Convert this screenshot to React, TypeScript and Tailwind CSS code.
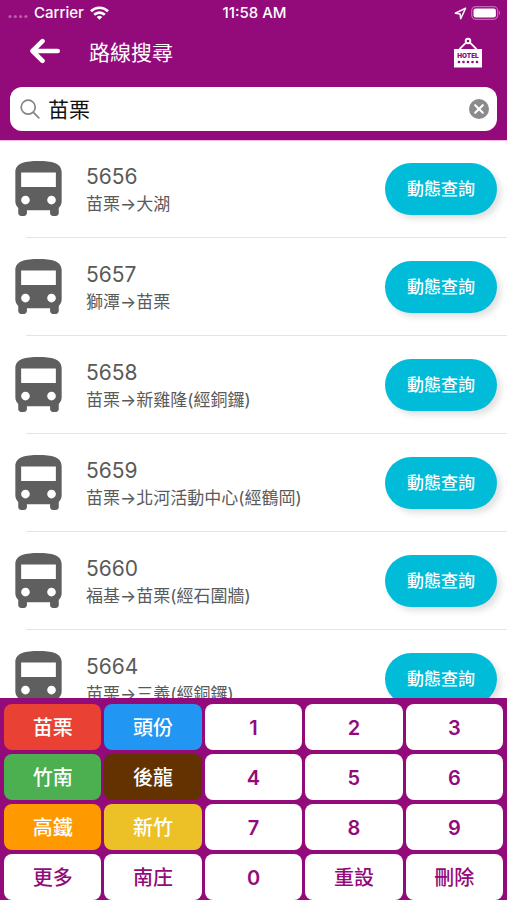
import { useState } from 'react';

interface Route {
  id: string;
  name: string;
}

interface Key {
  label: string;
  style: string;
}

const routes: Route[] = [
  { id: '5656', name: '苗栗→大湖' },
  { id: '5657', name: '獅潭→苗栗' },
  { id: '5658', name: '苗栗→新雞隆(經銅鑼)' },
  { id: '5659', name: '苗栗→北河活動中心(經鶴岡)' },
  { id: '5660', name: '福基→苗栗(經石圍牆)' },
  { id: '5664', name: '苗栗→三義(經銅鑼)' },
];

const digit = 'bg-white text-[#930a7b] font-semibold';
const action = 'bg-white text-[#930a7b] font-medium';

const keys: Key[] = [
  { label: '苗栗', style: 'bg-[#e94234] text-white font-medium' },
  { label: '頭份', style: 'bg-[#2196f3] text-white font-medium' },
  { label: '1', style: digit },
  { label: '2', style: digit },
  { label: '3', style: digit },
  { label: '竹南', style: 'bg-[#4caf50] text-white font-medium' },
  { label: '後龍', style: 'bg-[#643200] text-white font-medium' },
  { label: '4', style: digit },
  { label: '5', style: digit },
  { label: '6', style: digit },
  { label: '高鐵', style: 'bg-[#ff9900] text-white font-medium' },
  { label: '新竹', style: 'bg-[#ecc128] text-white font-medium' },
  { label: '7', style: digit },
  { label: '8', style: digit },
  { label: '9', style: digit },
  { label: '更多', style: action },
  { label: '南庄', style: action },
  { label: '0', style: digit },
  { label: '重設', style: action },
  { label: '刪除', style: action },
];

function StatusBar() {
  return (
    <div className="grid h-[26px] grid-cols-3 items-center pl-2 pr-1.5 text-[15px] font-medium">
      <div className="flex items-center gap-1.5">
        <svg width="20" height="14" viewBox="0 0 20 14" fill="#fff" fillOpacity="0.35" aria-hidden="true">
          <circle cx="2" cy="10.5" r="1.6" />
          <circle cx="7.3" cy="10.5" r="1.6" />
          <circle cx="12.6" cy="10.5" r="1.6" />
          <circle cx="17.9" cy="10.5" r="1.6" />
        </svg>
        <span>Carrier</span>
        <svg width="19" height="14" viewBox="0 0 19 14" fill="none" stroke="#fff" strokeWidth="2.7" aria-hidden="true">
          <path d="M1 5.2a12.2 12.2 0 0 1 17 0" />
          <path d="M4.2 8.8a7.6 7.6 0 0 1 10.6 0" />
          <path d="M9.5 13.8 6.7 10.9a4.2 4.2 0 0 1 5.6 0z" fill="#fff" stroke="none" />
        </svg>
      </div>
      <span className="text-center">11:58 AM</span>
      <div className="flex items-center justify-end gap-1">
        <svg width="13" height="13" viewBox="0 0 13 13" fill="none" stroke="#fff" strokeWidth="1.5" strokeLinejoin="round" aria-hidden="true">
          <path d="M11.6 1.3 1.3 6.2l4.8.7.6 4.8z" />
        </svg>
        <svg width="30" height="14" viewBox="0 0 30 14" aria-hidden="true">
          <rect x="0.7" y="0.7" width="26" height="12.6" rx="4" fill="none" stroke="#fff" strokeOpacity="0.4" strokeWidth="1.2" />
          <rect x="2.5" y="2.5" width="22.4" height="9" rx="2.2" fill="#fff" />
          <path d="M28 4.8c1.4.5 1.4 3.9 0 4.4z" fill="#fff" fillOpacity="0.4" />
        </svg>
      </div>
    </div>
  );
}

function BusIcon() {
  return (
    <svg width="47" height="55" viewBox="4 2 16 19" className="shrink-0" fill="#5f5f5f" aria-hidden="true">
      <path d="M4 16c0 .88.39 1.67 1 2.22V20c0 .55.45 1 1 1h1c.55 0 1-.45 1-1v-1h8v1c0 .55.45 1 1 1h1c.55 0 1-.45 1-1v-1.78c.61-.55 1-1.34 1-2.22V6c0-3.5-3.58-4-8-4s-8 .5-8 4v10zm3.5 1c-.83 0-1.5-.67-1.5-1.5S6.67 14 7.5 14s1.5.67 1.5 1.5S8.33 17 7.5 17zm9 0c-.83 0-1.5-.67-1.5-1.5s.67-1.5 1.5-1.5 1.5.67 1.5 1.5-.67 1.5-1.5 1.5zm1.5-6H6V6h12v5z" />
    </svg>
  );
}

function HotelIcon() {
  return (
    <svg width="30" height="32" viewBox="0 0 30 32" aria-hidden="true">
      <circle cx="15" cy="4" r="2.3" fill="none" stroke="#fff" strokeWidth="1.9" />
      <path d="M13.3 5.4 6.5 12.2M16.7 5.4l6.8 6.8" stroke="#fff" strokeWidth="1.9" />
      <rect x="1" y="12" width="28" height="18.5" fill="#fff" />
      <text x="15" y="20.8" textAnchor="middle" fontSize="6.4" fontWeight="900" fill="#930a7b">
        HOTEL
      </text>
      <g fill="#930a7b">
        <circle cx="6" cy="25" r="1.3" />
        <circle cx="10.5" cy="25" r="1.3" />
        <circle cx="15" cy="25" r="1.3" />
        <circle cx="19.5" cy="25" r="1.3" />
        <circle cx="24" cy="25" r="1.3" />
      </g>
    </svg>
  );
}

export default function App() {
  const [query, setQuery] = useState('苗栗');

  const handleKey = (label: string) => {
    if (label === '重設') {
      setQuery('');
    } else if (label === '刪除') {
      setQuery(prev => prev.slice(0, -1));
    } else if (/^\d$/.test(label)) {
      setQuery(prev => prev + label);
    } else if (label !== '更多') {
      setQuery(label);
    }
  };

  return (
    <div className="flex h-screen flex-col overflow-hidden bg-white font-['Inter','Noto_Sans_CJK_TC',sans-serif]">
      <header className="relative z-10 shrink-0 bg-[#930a7b] pb-[9px] text-white shadow-[0_1px_0_#f2b8e8]">
        <StatusBar />

        <div className="flex h-[61px] items-center pb-3 pl-[29px] pr-6">
          <button type="button" aria-label="返回">
            <svg width="32" height="26" viewBox="0 0 32 26" fill="none" stroke="#fff" strokeWidth="4.6" strokeLinecap="round" strokeLinejoin="round" aria-hidden="true">
              <path d="M28.7 13H4.5M13.5 3.2 3.5 13l10 9.8" />
            </svg>
          </button>
          <h1 className="ml-7 flex-1 pt-1 text-[21px] leading-7">路線搜尋</h1>
          <button type="button" aria-label="旅館" className="pt-1">
            <HotelIcon />
          </button>
        </div>

        {/* Search box */}
        <div className="mx-[10px] flex h-11 items-center rounded-xl bg-white pl-[10px] pr-2">
          <svg width="20" height="20" viewBox="0 0 20 20" fill="none" stroke="#858585" strokeWidth="1.7" strokeLinecap="round" aria-hidden="true">
            <circle cx="8.2" cy="8.2" r="7" />
            <path d="m13.4 13.4 5.4 5.4" />
          </svg>
          <input
            type="text"
            value={query}
            onChange={e => setQuery(e.target.value)}
            aria-label="路線搜尋"
            className="ml-2 min-w-0 flex-1 bg-transparent pt-0.5 text-[21px] leading-7 text-[#111111] outline-none"
          />
          <button type="button" aria-label="清除" onClick={() => setQuery('')}>
            <svg width="20" height="20" viewBox="0 0 20 20" aria-hidden="true">
              <circle cx="10" cy="10" r="10" fill="#8b8b8b" />
              <path d="m6.2 6.2 7.6 7.6M13.8 6.2l-7.6 7.6" stroke="#fff" strokeWidth="2.1" strokeLinecap="round" />
            </svg>
          </button>
        </div>
      </header>

      {/* Route list */}
      <ul className="min-h-0 flex-1 overflow-y-auto [scrollbar-width:none]">
        {routes.map(route => (
          <li key={route.id}>
            <div className="flex h-[97px] items-center pl-[15px] pr-[10px]">
              <BusIcon />
              <div className="ml-6 min-w-0 flex-1 pt-0.5 text-[#5a5a5a]">
                <p className="text-[21px] leading-7">{route.id}</p>
                <p className="text-[17px] leading-[26px]">{route.name}</p>
              </div>
              <button
                type="button"
                className="h-[52px] w-28 shrink-0 rounded-full bg-[#00bcd8] pt-0.5 text-[17px] font-medium text-white shadow-[4px_4px_6px_rgba(0,0,0,0.12)]"
              >
                動態查詢
              </button>
            </div>
            <div className="ml-[26px] h-px bg-[#e4e4e4]" />
          </li>
        ))}
      </ul>

      {/* Keypad */}
      <div className="grid shrink-0 grid-cols-5 gap-x-[3px] gap-y-1 bg-[#930a7b] px-1 pt-1.5">
        {keys.map(key => (
          <button
            key={key.label}
            type="button"
            onClick={() => handleKey(key.label)}
            className={`h-[46px] rounded-lg pt-0.5 text-[20px] ${key.style}`}
          >
            {key.label}
          </button>
        ))}
      </div>
    </div>
  );
}
